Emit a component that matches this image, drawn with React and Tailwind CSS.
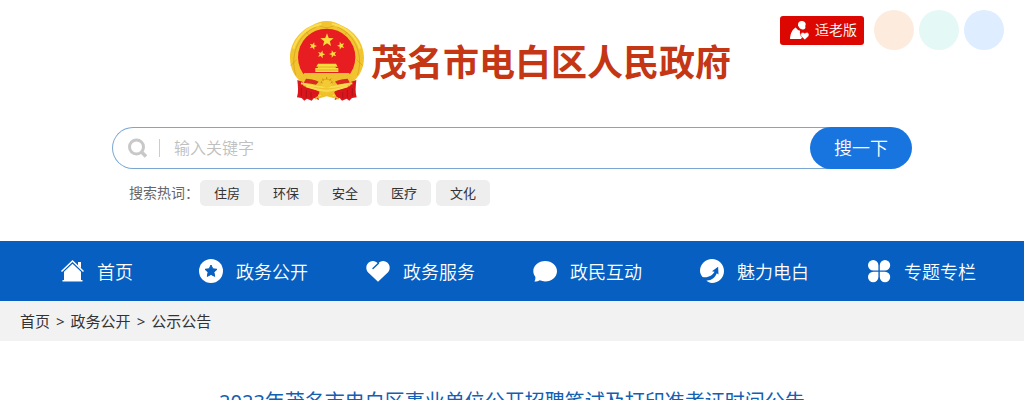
import { clsx } from 'clsx';

const hotWords = ['住房', '环保', '安全', '医疗', '文化'];

const star = (cx, cy, r, turn = 0) =>
  Array.from({ length: 10 }, (_, i) => {
    const radius = i % 2 ? r * 0.42 : r;
    const a = ((i * 36 - 90 + turn) * Math.PI) / 180;
    return `${(cx + radius * Math.cos(a)).toFixed(1)},${(cy + radius * Math.sin(a)).toFixed(1)}`;
  }).join(' ');

function Emblem() {
  return (
    <svg viewBox="9 6 228 246" className="w-[76px] h-[82px] shrink-0" aria-hidden="true">
      <path d="M122 9c18 0 30 6 42 12 42 17 70 54 70 98 0 32-15 59-36 75l-20 38H68l-20-38C26 178 12 151 12 119c0-44 28-81 68-98 12-6 24-12 42-12z" fill="#f2c530" />
      <g fill="none" stroke="#d59b1e" strokeWidth="2">
        <path d="M30 172C10 115 35 50 90 27" />
        <path d="M214 172c20-57-5-122-60-145" />
        <path d="M98 22c16 9 32 9 48 0" />
        <path d="M14 143l18-18M230 143l-18-18M61 41l9 12M184 41l-9 12" />
      </g>
      <path d="M22 92C34 54 66 25 106 18" fill="none" stroke="#f9df55" strokeWidth="6" />
      <path d="M222 92c-12-38-44-67-84-74" fill="none" stroke="#f9df55" strokeWidth="6" />
      <circle cx="122" cy="118" r="86" fill="#e71d22" />
      <g fill="#fadc3c">
        <polygon points={star(123, 67, 21)} />
        <polygon points={star(81, 84, 12, 18)} />
        <polygon points={star(165, 83, 12, -18)} />
        <polygon points={star(106, 109, 12, 18)} />
        <polygon points={star(141, 108, 12, -18)} />
        <path d="M96 137h54l5 9h-6v4h8v12H88v-12h8v-4h-5z" />
      </g>
      <path d="M94 147h56M90 156h66" stroke="#d49a1b" strokeWidth="2" />
      {/* ribbon and gear */}
      <path d="M42 187l13-22h134l13 22 4 26-46 9H84l-46-9z" fill="#efc12e" />
      <path d="M60 182c20 2 30 4 38 9l-8 9c-14-4-26-4-37-5zM185 182c-20 2-30 4-38 9l8 9c14-4 26-4 37-5z" fill="#db2a20" />
      <path d="M34 186l17 6 1 12 33 10 17 7-6 11 3 14-15-6-7 8-14-6-8 6-8-8-14-2c5-16 3-32 1-52zM211 186l-17 6-1 12-33 10-17 7 6 11-3 14 15-6 7 8 14-6 8 6 8-8 14-2c-5-16-3-32-1-52z" fill="#da151b" />
      <path d="M46 210v24M61 216v22M75 222v18M199 210v24M184 216v22M170 222v18" stroke="#a81317" strokeWidth="2.5" />
      <path d="M45 196c22 4 48 12 76 12s54-8 78-12M60 205c24 6 39 13 62 13s39-7 63-13" fill="none" stroke="#f8dc50" strokeWidth="6" />
      <circle cx="122" cy="194" r="16" fill="#f3ca34" />
      <path d="M105 192l5 3M108 182l6 5M122 177v7M136 182l-6 5M139 192l-5 3" stroke="#ca8c14" strokeWidth="3" />
      <path d="M105 196a17 13 0 0 1 34 0" fill="none" stroke="#cb9016" strokeWidth="2" />
      <path d="M97 219l24 8 27-8-8 12 10 11-28-7-26 7 9-12z" fill="#f1bf28" />
      <path d="M101 233l-14 10M143 233l15 10" stroke="#e9ba2d" strokeWidth="5" />
    </svg>
  );
}

function HomeIcon() {
  return (
    <svg viewBox="0 0 24 24" className="w-6 h-6" fill="#fff" aria-hidden="true">
      <path d="M1.500 12.500L12.500 2 23.500 12.500" fill="none" stroke="#fff" strokeWidth="1.500" />
      <path d="M18 3h3v6.200L18 6.400zM12.500 4.700L21 12.800v8.200h1.500v1.500h-20V21H4v-8.200z" />
    </svg>
  );
}

function StarIcon() {
  return (
    <svg viewBox="0 0 24 24" className="w-6 h-6" aria-hidden="true">
      <circle cx="12" cy="12" r="12" fill="#fff" />
      <polygon points="12,6 13.8,9.8 18,10.3 14.9,13.2 15.7,17.4 12,15.4 8.3,17.4 9.1,13.2 6,10.3 10.2,9.8" fill="#065fc1" stroke="#065fc1" strokeLinejoin="round" />
    </svg>
  );
}

function HeartIcon() {
  return (
    <svg viewBox="0 0 24 24" className="w-6 h-6" aria-hidden="true">
      <path d="M12 22.800L2.200 13.500C-1 10 0 4.500 4 2.700c3-1.300 6-.5 8 1.800 2-2.300 5-3.100 8-1.800 4 1.800 5 7.300 1.800 10.800z" fill="#fff" />
      <path d="M12.500 4.300L7 9.600" stroke="#065fc1" strokeWidth="1.400" strokeLinecap="round" />
    </svg>
  );
}

function ChatIcon() {
  return (
    <svg viewBox="0 0 24 24" className="w-6 h-6" fill="#fff" aria-hidden="true">
      <path d="M12.200 2C18.800 2 24 6.500 24 12.200s-5.200 10.200-11.800 10.200c-2 0-3.800-.4-5.400-1.100-1.600 1.100-3.400 1.500-5.400 1.200.9-1.400 1.200-3 .9-4.700C1.100 16.200.3 14.300.3 12.200.3 6.500 5.600 2 12.200 2z" />
    </svg>
  );
}

function ArrowIcon() {
  return (
    <svg viewBox="0 0 24 24" className="w-6 h-6" aria-hidden="true">
      <path d="M12 0c6.500 0 12 5.400 12 12s-5.400 12-12 12c-2.200 0-4.200-1-5.600-2.500 4.500.5 8.500-2.500 10.400-7.200l1.700 1.300-.4-7.800-6.100 4.500 2.500.5c-2.300 3.800-6.500 6.400-12 5.200C1 16 0 14.200 0 12 0 5.400 5.400 0 12 0z" fill="#fff" />
    </svg>
  );
}

function CloverIcon() {
  return (
    <svg viewBox="0 0 24 24" className="w-6 h-6" fill="#fff" aria-hidden="true">
      <path d="M11.400 11.400H6.200a5.200 5.200 0 1 1 5.200-5.200zM12.800 11.400V6.200a5.200 5.200 0 1 1 5.200 5.200zM11.400 12.800V18a5.200 5.200 0 1 1-5.200-5.200zM12.800 12.800H18a5.200 5.200 0 1 1-5.200 5.200z" />
    </svg>
  );
}

const navItems = [
  { label: '首页', Icon: HomeIcon },
  { label: '政务公开', Icon: StarIcon },
  { label: '政务服务', Icon: HeartIcon },
  { label: '政民互动', Icon: ChatIcon },
  { label: '魅力电白', Icon: ArrowIcon },
  { label: '专题专栏', Icon: CloverIcon },
];

export default function App() {
  return (
    <div className="relative bg-white text-[#333] font-['Noto_Sans','Noto_Sans_CJK_SC',sans-serif]">
      {/* Accessibility tools */}
      <div className="absolute top-2.5 right-5 flex items-center gap-[5px]">
        <a href="#elder" className="flex items-center w-[84px] h-[29px] mr-[5px] pl-2 rounded-[3px] bg-[#dc0700] text-white text-sm font-[350]">
          <svg viewBox="0 0 27 27" className="w-[27px] h-[27px] shrink-0" fill="#fff" aria-hidden="true">
            <path d="M10 7.500C10 5.500 11.500 4.300 13.600 4.100c1.900-.2 3.600.8 4 2.500.2.900.1 1.500-.3 2.100l.1 2.200c-1.200 2-4.400 2-5.900.1-.6-.8-.9-1.700-1.500-2.200z" />
            <path d="M2 22c.2-4.600 2-9.500 5.600-11.500 1.400 1.500 2.100 2.900 4.500 3.200-.8 2 .2 4 2.600 5.800L13 22z" />
            <path d="M16.800 22.800l-3.500-3.300c-2.100-2.300.9-5.400 3.500-3.200 2.600-2.200 5.600.9 3.500 3.200z" stroke="#dc0700" strokeWidth=".5" />
          </svg>
          适老版
        </a>
        <span className="size-10 rounded-full bg-[#fdebdd]" />
        <span className="size-10 rounded-full bg-[#e4f8f5]" />
        <span className="size-10 rounded-full bg-[#deedff]" />
      </div>

      <header className="flex flex-col items-center pt-5">
        <h1 className="flex items-center gap-1.5 pr-1 text-4xl font-bold text-[#c43614]">
          <Emblem />
          <span className="pt-1">茂名市电白区人民政府</span>
        </h1>

        <div className="w-full max-w-[800px] mt-[25px]">
          <form className="flex h-[42px] items-stretch rounded-full">
            <label htmlFor="keyword" className="flex items-center w-12 pl-[15px] border border-r-0 border-[#79a6d2] rounded-l-full">
              <svg viewBox="0 0 20 20" className="w-5 h-5" fill="none" stroke="#c8c8c8" strokeWidth="3" aria-hidden="true">
                <circle cx="8.500" cy="9" r="7" />
                <path d="M13.500 14l4.500 4.500" strokeWidth="3.500" />
              </svg>
            </label>
            <div className="flex flex-1 items-center -mr-6 border-y border-[#79a6d2]">
              <span className="w-px h-[18px] bg-[#ccc] -ml-px" />
              <input
                id="keyword"
                type="text"
                aria-label="输入关键字"
                placeholder="输入关键字"
                className="w-full pl-3.5 font-[350] outline-none placeholder:text-[#c0c0c0]"
              />
            </div>
            <button type="button" className="relative w-[102px] rounded-full bg-[#1875df] text-white text-lg font-[350]">
              搜一下
            </button>
          </form>

          <div className="flex items-center mt-[11px] pl-[17px] text-sm text-[#666]">
            <span className="w-[71px] whitespace-nowrap">搜索热词：</span>
            <div className="flex gap-[5px]">
              {hotWords.map((word) => (
                <a key={word} href="#search" className="px-3.5 rounded-[5px] bg-[#eee] text-[13px] leading-[26px] text-[#333]">
                  {word}
                </a>
              ))}
            </div>
          </div>
        </div>
      </header>

      {/* Navigation */}
      <nav className="flex items-center justify-between h-[60px] mt-[35px] pl-[60px] pr-12 bg-[#065fc1] text-white text-lg font-[350]">
        {navItems.map(({ label, Icon }, i) => (
          <a key={label} href="#nav" className={clsx('flex items-center gap-[13px] whitespace-nowrap', i === 0 && 'min-w-[81px]')}>
            <Icon />
            <span className="pt-0.5">{label}</span>
          </a>
        ))}
      </nav>

      <div className="flex items-center gap-1.5 h-10 px-5 bg-[#f2f2f2] text-[15px]">
        <a href="#home">首页</a>
        <span>&gt;</span>
        <a href="#open">政务公开</a>
        <span>&gt;</span>
        <a href="#notice">公示公告</a>
      </div>

      <main className="px-5 pt-[47px]">
        <h2 className="text-center text-xl text-[#1360b3]">
          2023年茂名市电白区事业单位公开招聘笔试及打印准考证时间公告
        </h2>
      </main>
    </div>
  );
}
